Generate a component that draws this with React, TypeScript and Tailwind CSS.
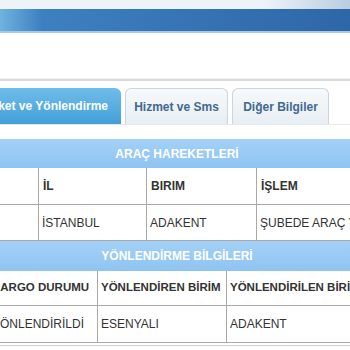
const topCols = ['', 'İL', 'BIRIM', 'İŞLEM'];
const topRow = ['', 'İSTANBUL', 'ADAKENT', 'ŞUBEDE ARAÇ YÜKLEME'];
const yonCols = ['KARGO DURUMU', 'YÖNLENDİREN BİRİM', 'YÖNLENDİRİLEN BİRİM'];
const yonRow = ['YÖNLENDİRİLDİ', 'ESENYALI', 'ADAKENT'];

function SectionHeader({ title, className }: { title: string; className: string }) {
  return (
    <div className={`flex items-center justify-center pl-[4px] bg-gradient-to-b from-[#a3d1f7] to-[#8fc4f1] text-white font-bold text-[12px] ${className}`}>
      {title}
    </div>
  );
}

export default function App() {
  return (
    <div className="w-[350px] h-[350px] overflow-hidden bg-white text-[#333] font-['Liberation_Sans',Arial,sans-serif]">
      <div className="h-[9px] bg-gradient-to-r from-[#eef3f8] via-[#eef3f8] via-75% to-[#b9cde0]" />
      <div className="h-[24px] bg-gradient-to-r from-[#6fb3df] via-[#3d80c0] via-[12%] to-[#2e67a7] border-b-2 border-[#a8c8e6]" />
      <div className="h-[46px] border-b border-[#eef0f2]" />
      <div className="h-[2px] bg-[#d6dbe0]" />
      <div className="h-[7px]" />

      <div className="flex h-[36px] gap-[4px] text-[12px] font-bold">
        <div className="-ml-[79px] w-[200px] flex items-center justify-end pr-[13px] rounded-t-[6px] bg-gradient-to-b from-[#6fbde9] to-[#429fd8] text-white">
          Araç Hareket ve Yönlendirme
        </div>
        <div className="w-[103px] flex items-center justify-center rounded-t-[6px] border border-b-0 border-[#c9d5e0] bg-gradient-to-b from-[#f7f9fb] to-[#e7eef4] text-[#41698f]">
          Hizmet ve Sms
        </div>
        <div className="w-[97px] flex items-center justify-center rounded-t-[6px] border border-b-0 border-[#c9d5e0] bg-gradient-to-b from-[#f7f9fb] to-[#e7eef4] text-[#41698f]">
          Diğer Bilgiler
        </div>
      </div>
      <div className="h-[15px] border-t border-[#e3e9ef]" />

      <SectionHeader title="ARAÇ HAREKETLERİ" className="h-[29px]" />
      <div className="-ml-[61px] grid grid-cols-[100px_108px_110px_200px] text-[12px]">
        {topCols.map((c, i) => (
          <div key={i} className="h-[37px] flex items-center px-[4px] font-bold border-r border-b border-[#a9a9a9]">
            {c}
          </div>
        ))}
        {topRow.map((c, i) => (
          <div key={i} className="h-[36px] flex items-center px-[3px] whitespace-nowrap overflow-hidden border-r border-b border-[#a9a9a9]">
            {c}
          </div>
        ))}
      </div>

      <SectionHeader title="YÖNLENDİRME BİLGİLERİ" className="h-[30px]" />
      <div className="-ml-[11px] grid grid-cols-[109px_129px_200px]">
        {yonCols.map((c, i) => (
          <div key={i} className="h-[35px] flex items-center px-[3px] text-[11.5px] font-bold whitespace-nowrap overflow-hidden border-r border-b border-[#a9a9a9]">
            {c}
          </div>
        ))}
        {yonRow.map((c, i) => (
          <div key={i} className="h-[37px] flex items-center px-[3px] text-[12px] whitespace-nowrap overflow-hidden border-r border-b border-[#a9a9a9]">
            {c}
          </div>
        ))}
      </div>
      <div className="h-[2px]" />
      <div className="h-[1px] bg-[#cfcfcf]" />
    </div>
  );
}
